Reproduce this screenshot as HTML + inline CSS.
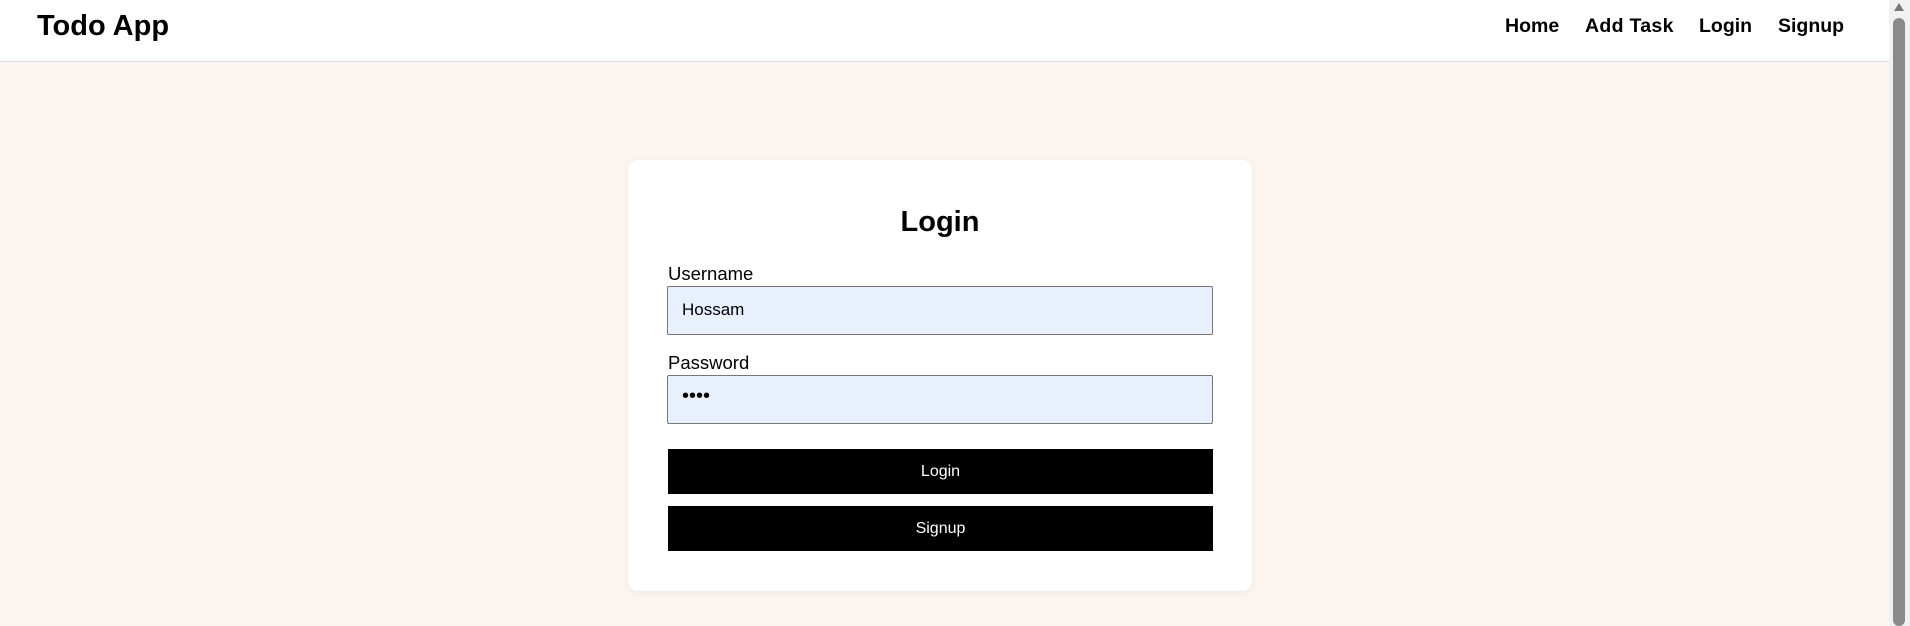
<!DOCTYPE html>
<html><head><meta charset="utf-8"><style>
*{box-sizing:border-box;margin:0;padding:0}
body{width:1910px;height:626px;overflow:hidden;background:#fdf5f0;font-family:"Liberation Sans",sans-serif;position:relative}
.hdr{position:absolute;left:0;top:0;width:1889px;height:62px;background:#fff;border-bottom:1px solid #ddd}
.logo{position:absolute;left:37px;top:10px;font-size:29px;font-weight:bold;color:#000}
.nav a{position:absolute;top:15px;font-size:19.5px;font-weight:bold;color:#000;text-decoration:none}
.sb{position:absolute;right:0;top:0;width:21px;height:626px;background:#f1f1f1}
.sb .th{position:absolute;left:4px;top:18px;width:12px;height:608px;background:#8a8a8a;border-radius:6px}
.sb .ar{position:absolute;left:5px;top:3px;width:0;height:0;border-left:5px solid transparent;border-right:5px solid transparent;border-bottom:8px solid #777}
.card{position:absolute;left:628px;top:160px;width:624px;height:431px;background:#fff;border-radius:10px;box-shadow:0 2px 10px rgba(0,0,0,.06)}
h2{position:absolute;left:0;width:100%;top:46px;text-align:center;font-size:29px;font-weight:bold}
.lbl{position:absolute;left:40px;font-size:18.5px;color:#000}
.inp{position:absolute;left:39px;width:546px;height:49px;background:#e8f0fe;border:1px solid #767676;border-radius:2px;font-size:17px;padding:13px 14px;color:#000}
.btn{position:absolute;left:40px;width:545px;height:45px;background:#000;color:#fff;font-size:16px;text-align:center;line-height:45px}
</style></head><body>
<div class="hdr">
<div class="logo">Todo App</div>
<div class="nav"><a style="left:1505px">Home</a><a style="left:1585px;letter-spacing:0.3px">Add Task</a><a style="left:1699px">Login</a><a style="left:1778px">Signup</a></div>
</div>
<div class="sb"><div class="ar"></div><div class="th"></div></div>
<div class="card">
<h2>Login</h2>
<div class="lbl" style="top:103px">Username</div>
<div class="inp" style="top:126px">Hossam</div>
<div class="lbl" style="top:192px">Password</div>
<div class="inp" style="top:215px;font-size:20px;padding-top:9px">••••</div>
<div class="btn" style="top:289px">Login</div>
<div class="btn" style="top:346px">Signup</div>
</div>
</body></html>
